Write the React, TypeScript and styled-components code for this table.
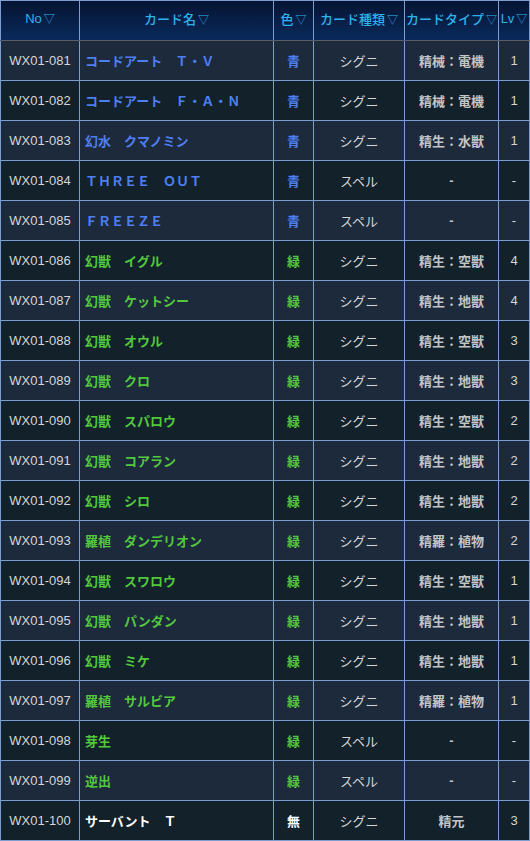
import { createGlobalStyle, styled } from "styled-components";

type Color = "blue" | "green" | "none";

type Card = {
  no: string;
  name: string;
  color: Color;
  kind: string;
  type: string;
  lv: string;
};

const cards: Card[] = [
  { no: "WX01-081", name: "コードアート　Ｔ・Ｖ", color: "blue", kind: "シグニ", type: "精械：電機", lv: "1" },
  { no: "WX01-082", name: "コードアート　Ｆ・Ａ・Ｎ", color: "blue", kind: "シグニ", type: "精械：電機", lv: "1" },
  { no: "WX01-083", name: "幻水　クマノミン", color: "blue", kind: "シグニ", type: "精生：水獣", lv: "1" },
  { no: "WX01-084", name: "ＴＨＲＥＥ　ＯＵＴ", color: "blue", kind: "スペル", type: "-", lv: "-" },
  { no: "WX01-085", name: "ＦＲＥＥＺＥ", color: "blue", kind: "スペル", type: "-", lv: "-" },
  { no: "WX01-086", name: "幻獣　イグル", color: "green", kind: "シグニ", type: "精生：空獣", lv: "4" },
  { no: "WX01-087", name: "幻獣　ケットシー", color: "green", kind: "シグニ", type: "精生：地獣", lv: "4" },
  { no: "WX01-088", name: "幻獣　オウル", color: "green", kind: "シグニ", type: "精生：空獣", lv: "3" },
  { no: "WX01-089", name: "幻獣　クロ", color: "green", kind: "シグニ", type: "精生：地獣", lv: "3" },
  { no: "WX01-090", name: "幻獣　スパロウ", color: "green", kind: "シグニ", type: "精生：空獣", lv: "2" },
  { no: "WX01-091", name: "幻獣　コアラン", color: "green", kind: "シグニ", type: "精生：地獣", lv: "2" },
  { no: "WX01-092", name: "幻獣　シロ", color: "green", kind: "シグニ", type: "精生：地獣", lv: "2" },
  { no: "WX01-093", name: "羅植　ダンデリオン", color: "green", kind: "シグニ", type: "精羅：植物", lv: "2" },
  { no: "WX01-094", name: "幻獣　スワロウ", color: "green", kind: "シグニ", type: "精生：空獣", lv: "1" },
  { no: "WX01-095", name: "幻獣　パンダン", color: "green", kind: "シグニ", type: "精生：地獣", lv: "1" },
  { no: "WX01-096", name: "幻獣　ミケ", color: "green", kind: "シグニ", type: "精生：地獣", lv: "1" },
  { no: "WX01-097", name: "羅植　サルビア", color: "green", kind: "シグニ", type: "精羅：植物", lv: "1" },
  { no: "WX01-098", name: "芽生", color: "green", kind: "スペル", type: "-", lv: "-" },
  { no: "WX01-099", name: "逆出", color: "green", kind: "スペル", type: "-", lv: "-" },
  { no: "WX01-100", name: "サーバント　Ｔ", color: "none", kind: "シグニ", type: "精元", lv: "3" },
];

const colorLabel: Record<Color, string> = { blue: "青", green: "緑", none: "無" };
const colorValue: Record<Color, string> = { blue: "#4d7ff2", green: "#52c83c", none: "#ffffff" };

// column titles and their content widths in px (last one takes the rest)
const headers: [string, number | undefined][] = [
  ["No", 78],
  ["カード名", 193],
  ["色", 39],
  ["カード種類", 90],
  ["カードタイプ", 93],
  ["Lv", undefined],
];

const GlobalStyle = createGlobalStyle`
  html, body {
    margin: 0;
    padding: 0;
    background: #13212a;
  }
  body {
    font-family: "Liberation Sans", "Noto Sans CJK JP", sans-serif;
  }
`;

const Table = styled.table`
  width: 530px;
  border-collapse: collapse;
  table-layout: fixed;
  font-size: 13px;
`;

const HeadRow = styled.tr`
  height: 40px;
  background: linear-gradient(to bottom, #061432 0%, #0a2a5c 100%);
`;

const Th = styled.th<{ $w?: number }>`
  width: ${(p) => (p.$w ? `${p.$w}px` : "auto")};
  border: 1px solid #7d9dd0;
  border-bottom: 1px solid #5a5f66;
  color: #2fb2ea;
  font-weight: 500;
  font-size: 13px;
  padding: 0 0 5px;
  text-align: center;
  white-space: nowrap;
  overflow: visible;
`;

const SortMark = styled.span`
  font-size: 11px;
  margin-left: 2px;
`;

const Row = styled.tr<{ $alt: boolean }>`
  height: 40px;
  background: ${(p) => (p.$alt ? "#13212a" : "#1d2a3c")};
`;

const Td = styled.td`
  border: 1px solid #7d9dd0;
  padding: 0 0 1px;
  text-align: center;
  color: #d6d6d6;
  white-space: nowrap;
  overflow: hidden;
`;

const NameCell = styled(Td)<{ $color: Color }>`
  text-align: left;
  padding-left: 5px;
  font-weight: bold;
  color: ${(p) => colorValue[p.$color]};
`;

const ColorCell = styled(Td)<{ $color: Color }>`
  font-weight: bold;
  color: ${(p) => colorValue[p.$color]};
`;

const TypeCell = styled(Td)`
  font-weight: bold;
  color: #c4c4c4;
`;

export default function App() {
  return (
    <>
      <GlobalStyle />
      <Table>
        <thead>
          <HeadRow>
            {headers.map(([h, w]) => (
              <Th key={h} $w={w}>
                {h}
                <SortMark>▽</SortMark>
              </Th>
            ))}
          </HeadRow>
        </thead>
        <tbody>
          {cards.map((c, i) => (
            <Row key={c.no} $alt={i % 2 === 1}>
              <Td>{c.no}</Td>
              <NameCell $color={c.color}>{c.name}</NameCell>
              <ColorCell $color={c.color}>{colorLabel[c.color]}</ColorCell>
              <Td>{c.kind}</Td>
              <TypeCell>{c.type}</TypeCell>
              <Td>{c.lv}</Td>
            </Row>
          ))}
        </tbody>
      </Table>
    </>
  );
}
